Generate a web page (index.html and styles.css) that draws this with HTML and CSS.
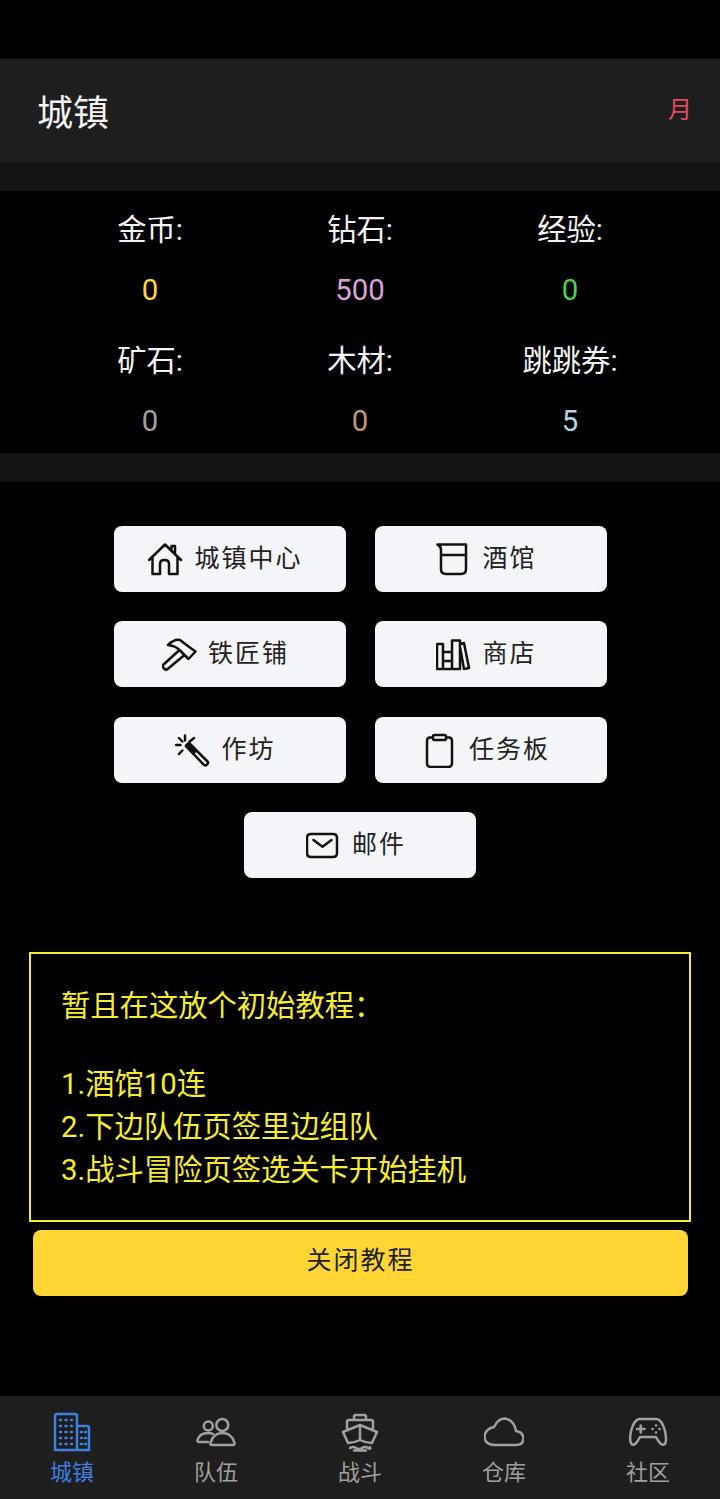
FILE: index.html
```html
<!DOCTYPE html>
<html lang="zh-CN">
<head>
	<meta charset="UTF-8">
	<title>城镇</title>
	<link rel="stylesheet" href="styles.css">
</head>
<body>
	<div class="app">
		<header class="top-bar">
			<h1>城镇</h1>
			<span class="moon">月</span>
		</header>

		<section class="stats">
			<div class="stat"><span class="stat-name">金币:</span><span class="stat-num gold">0</span></div>
			<div class="stat"><span class="stat-name">钻石:</span><span class="stat-num diamond">500</span></div>
			<div class="stat"><span class="stat-name">经验:</span><span class="stat-num exp">0</span></div>
			<div class="stat"><span class="stat-name">矿石:</span><span class="stat-num ore">0</span></div>
			<div class="stat"><span class="stat-name">木材:</span><span class="stat-num wood">0</span></div>
			<div class="stat"><span class="stat-name">跳跳券:</span><span class="stat-num ticket">5</span></div>
		</section>

		<section class="menu">
			<a class="menu-btn">
				<svg class="btn-icon" viewBox="0 0 36 36"><path d="M1 19 17 3.500 33 19M4.500 16V33H12V23Q12 19 16.500 19T21 23V33H29.500V16M23.500 8V5H27V12"/></svg>
				<span class="btn-text">城镇中心</span>
			</a>
			<a class="menu-btn">
				<svg class="btn-icon" viewBox="0 0 36 36"><path d="M1.500 3.500H30V28Q30 33 25 33H10Q5 33 5 28V9Q5 5 1.500 3.500ZM5 14H30"/></svg>
				<span class="btn-text">酒馆</span>
			</a>
			<a class="menu-btn">
				<svg class="btn-icon" viewBox="0 0 36 36"><path d="M1 29 17.500 14 22.500 19 5 33.500Q3.500 34 2 32.500T1 29ZM17.500 14Q14 10 6 9 12 3 18 4L26.500 10.500 33.500 15.500 26.500 23 22.500 19"/></svg>
				<span class="btn-text">铁匠铺</span>
			</a>
			<a class="menu-btn">
				<svg class="btn-icon" viewBox="0 0 36 36"><path d="M1 8H7V33H1ZM7 16H16V33H7ZM7 25H16M16 4.500H24V33H16ZM24 8 28 7 33 32 28 33 24 11"/></svg>
				<span class="btn-text">商店</span>
			</a>
			<a class="menu-btn">
				<svg class="btn-icon" viewBox="0 0 36 36"><path d="M11 14 14 11 33 30Q33.500 31 32 32.500T29 33ZM10 3.500V8.500M1 13H5.500M4 6 7.300 9.500M19 6 14.700 9.500M4 22 7.300 18.500"/><path class="solid" d="M11 14 14 11 21 18.500 18 21.500Z"/></svg>
				<span class="btn-text">作坊</span>
			</a>
			<a class="menu-btn">
				<svg class="btn-icon" viewBox="0 0 36 36"><path d="M10 5.500H7Q4 5.500 4 9V31Q4 35 8 35H25Q29 35 29 31V9Q29 5.500 26 5.500H23M11.500 3H21.500Q23 3 23 4.500V6.500Q23 8 21.500 8H11.500Q10 8 10 6.500V4.500Q10 3 11.500 3Z"/></svg>
				<span class="btn-text">任务板</span>
			</a>
			<a class="menu-btn">
				<svg class="btn-icon" viewBox="0 0 36 36"><path d="M5 7H27Q31 7 31 11V26Q31 30 27 30H5Q1 30 1 26V11Q1 7 5 7ZM7.500 13 16.500 19.700 25.500 13"/></svg>
				<span class="btn-text">邮件</span>
			</a>
		</section>

		<section class="tutorial">
			<div class="tutorial-box">
				<p class="tutorial-title">暂且在这放个初始教程：</p>
				<p>1.酒馆10连</p>
				<p>2.下边队伍页签里边组队</p>
				<p>3.战斗冒险页签选关卡开始挂机</p>
			</div>
			<a class="close-btn">关闭教程</a>
		</section>

		<nav class="tabbar">
			<a class="tab active">
				<svg class="tab-icon" viewBox="0 0 40 40">
					<path d="M3 38V4Q3 2 5 2H23Q25 2 25 4V38ZM25 14H35Q37 14 37 16V38H3"/>
					<path class="dots" d="M8 8H9M13.500 8H14.500M19 8H20M8 14H9M13.500 14H14.500M19 14H20M8 20H9M13.500 20H14.500M19 20H20M8 26H9M13.500 26H14.500M19 26H20M8 32H9M13.500 32H14.500M19 32H20M29 20H30M33 20H34M29 26H30M33 26H34M29 32H30M33 32H34"/>
				</svg>
				<span>城镇</span>
			</a>
			<a class="tab">
				<svg class="tab-icon" viewBox="0 0 40 40">
					<circle cx="12.300" cy="14" r="4.500"/><circle cx="26.300" cy="13" r="6"/>
					<path d="M12 30H3Q1 30 1.500 28 3.500 21 12 21 15 21 17 22M16 33Q14 33 14.500 31 17 21 26.500 21 36 21 38.500 31 39 33 37 33Z"/>
				</svg>
				<span>队伍</span>
			</a>
			<a class="tab">
				<svg class="tab-icon" viewBox="0 0 40 40">
					<path d="M14 8V5Q14 3 16 3H24Q26 3 26 5V8M7 17V10Q7 8 9 8H31Q33 8 33 10V17M20 13 3 20 8 31Q14 31 20 28 26 31 32 31L37 20ZM20 13V28M10 36Q13 34 16 36T22 36 28 36 30 35M14 38.500H26"/>
				</svg>
				<span>战斗</span>
			</a>
			<a class="tab">
				<svg class="tab-icon" viewBox="0 0 40 40">
					<path d="M10 33H32Q39 33 39.500 26.500 39 20 32 19 30 8 21 6.500 14 6.500 10 15 1 17 .5 25 1 32 10 33Z"/>
				</svg>
				<span>仓库</span>
			</a>
			<a class="tab">
				<svg class="tab-icon" viewBox="0 0 40 40">
					<path d="M11 7H29Q34 8 37 19 39 29 37 32 33 35 28 25H12Q7 35 3.500 32 1 29 3 19 6 8 11 7ZM9 17H16.500M12.700 13.500V20.500"/>
					<path class="dots" d="M28 13.500H28.100M28 20.500H28.100M24.500 17H24.600M31.500 17H31.600"/>
				</svg>
				<span>社区</span>
			</a>
		</nav>
	</div>
</body>
</html>
```

FILE: styles.css
```css
*{
	box-sizing: border-box;
}
html, body{
	margin: 0;
	padding: 0;
	background: #000;
}
body{
	font-family: "Roboto", "Noto Sans CJK SC", sans-serif;
	color: #fff;
}
p{
	margin: 0;
}
.app{
	height: 1499px;
	padding-top: 59px;
	display: flex;
	flex-direction: column;
}
.top-bar{
	height: 103px;
	padding: 0 28px 0 37px;
	background: #1e1e1e;
	display: flex;
	align-items: center;
	justify-content: space-between;
}
.top-bar h1{
	margin: 0 0 2px;
	font-size: 36px;
	font-weight: 400;
	color: #f4f4f4;
}
.moon{
	margin-bottom: 6px;
	font-size: 24px;
	color: #e04b5a;
}
.stats{
	margin-top: 29px;
	height: 262px;
	padding: 7px 0;
	display: grid;
	grid-template-columns: repeat(3, 210px);
	justify-content: center;
	box-shadow: 0 -29px 0 #131313, 0 29px 0 #131313;
}
.stat{
	height: 131px;
	padding-top: 9.500px;
	display: flex;
	flex-direction: column;
	align-items: center;
	gap: 16px;
	font-size: 29.300px;
	line-height: 44px;
}
.stat-name{
	color: #f4f4f4;
}
.gold{ color: #ffd633; }
.diamond{ color: #dda0dd; }
.exp{ color: #4cd04c; }
.ore{ color: #a0a0a0; }
.wood{ color: #c39a6b; }
.ticket{ color: #add8e6; }
.menu{
	margin-top: 73px;
	display: flex;
	flex-wrap: wrap;
	justify-content: center;
	gap: 29.300px 29px;
}
.menu-btn{
	width: 232px;
	height: 66px;
	padding-right: 8px;
	border-radius: 8px;
	background: #f4f5f9;
	color: #222;
	display: flex;
	align-items: center;
	justify-content: center;
	gap: 10px;
}
.btn-icon{
	width: 36px;
	height: 36px;
	fill: none;
	stroke: #111;
	stroke-width: 2.500;
	stroke-linejoin: round;
	stroke-linecap: round;
}
.btn-icon .solid{
	fill: #111;
}
.btn-text{
	margin-bottom: 6px;
	font-size: 25px;
	letter-spacing: 2px;
}
.tutorial{
	margin-top: 74px;
	padding: 0 29px;
}
.tutorial-box{
	height: 270px;
	padding: 31px 30px 0;
	border: 2px solid #f7ec2e;
	color: #f7ec2e;
	font-size: 29.300px;
	line-height: 43px;
}
.tutorial-title{
	margin-bottom: 35px;
}
.close-btn{
	margin: 8px 3px 0 4px;
	height: 66px;
	padding-bottom: 9px;
	border-radius: 8px;
	background: #ffd633;
	color: #222;
	font-size: 25px;
	letter-spacing: 2px;
	display: flex;
	align-items: center;
	justify-content: center;
}
.tabbar{
	margin-top: auto;
	height: 103px;
	background: #1e1e1e;
	display: flex;
}
.tab{
	flex: 1;
	padding-top: 16px;
	display: flex;
	flex-direction: column;
	align-items: center;
	color: #a0a0a0;
	font-size: 22px;
	line-height: 30px;
}
.tab-icon{
	width: 40px;
	height: 40px;
	margin-bottom: 6px;
	fill: none;
	stroke: #a0a0a0;
	stroke-width: 2.500;
	stroke-linejoin: round;
	stroke-linecap: round;
}
.tab.active{
	color: #3f7fe0;
}
.tab.active .tab-icon{
	stroke: #3f7fe0;
}
```
